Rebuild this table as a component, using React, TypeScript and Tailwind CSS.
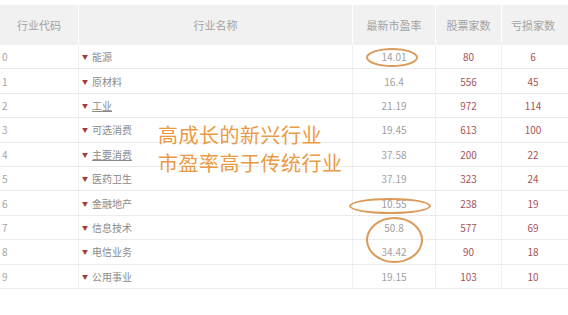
import React from "react";

const rows = [
  { code: "0", name: "能源", pe: "14.01", stocks: "80", loss: "6" },
  { code: "1", name: "原材料", pe: "16.4", stocks: "556", loss: "45" },
  { code: "2", name: "工业", pe: "21.19", stocks: "972", loss: "114", underline: true },
  { code: "3", name: "可选消费", pe: "19.45", stocks: "613", loss: "100" },
  { code: "4", name: "主要消费", pe: "37.58", stocks: "200", loss: "22", underline: true },
  { code: "5", name: "医药卫生", pe: "37.19", stocks: "323", loss: "24" },
  { code: "6", name: "金融地产", pe: "10.55", stocks: "238", loss: "19" },
  { code: "7", name: "信息技术", pe: "50.8", stocks: "577", loss: "69" },
  { code: "8", name: "电信业务", pe: "34.42", stocks: "90", loss: "18" },
  { code: "9", name: "公用事业", pe: "19.15", stocks: "103", loss: "10" },
];

const cols = "grid grid-cols-[79px_274px_83px_66px_62px]";

export default function App() {
  return (
    <div
      className="relative w-[568px] h-[315px] bg-white overflow-hidden"
      style={{ fontFamily: '"Noto Sans CJK SC", "Noto Sans", sans-serif' }}
    >
      <div className="pt-[5px]">
        {/* header */}
        <div className={`${cols} h-[40px] bg-[#f1f1f1] text-[11px] text-[#a3a3a3]`}>
          <div className="flex items-center justify-center border-r border-white">行业代码</div>
          <div className="flex items-center justify-center border-r border-white">行业名称</div>
          <div className="flex items-center justify-center border-r border-white">最新市盈率</div>
          <div className="flex items-center justify-center border-r border-white">股票家数</div>
          <div className="flex items-center justify-center">亏损家数</div>
        </div>

        {/* body */}
        {rows.map((r) => (
          <div
            key={r.code}
            className={`${cols} h-[24.4px] border-b border-[#ebebeb] text-[10px]`}
          >
            <div className="flex items-center pl-[2px] text-[#a5a5a5] border-r border-[#f0f0f0]">{r.code}</div>
            <div className="flex items-center pl-[3px] text-[#8a8a8a] border-r border-[#f0f0f0]">
              <span className="text-[#a33a3a] text-[6px] mr-[4px]">▼</span>
              <span className={r.underline ? "underline" : ""}>{r.name}</span>
            </div>
            <div className="flex items-center justify-center text-[#a0a0a0] border-r border-[#f0f0f0]">{r.pe}</div>
            <div className="flex items-center justify-center text-[#a85458] border-r border-[#f0f0f0]">{r.stocks}</div>
            <div className="flex items-center justify-center text-[#a85458]">{r.loss}</div>
          </div>
        ))}
      </div>

      {/* annotations */}
      <div className="absolute left-[158px] top-[121px] text-[20px] leading-[28px] text-[#eb9a44] tracking-[0.5px]">
        <div>高成长的新兴行业</div>
        <div>市盈率高于传统行业</div>
      </div>
      <div className="absolute left-[366px] top-[48px] w-[52px] h-[19px] rounded-[50%] border-2 border-[#dc9a58]" />
      <div className="absolute left-[349px] top-[198px] w-[82px] h-[16px] rounded-[50%] border-2 border-[#dc9a58]" />
      <div className="absolute left-[366px] top-[217px] w-[57px] h-[46px] rounded-[50%] border-2 border-[#dc9a58]" />
    </div>
  );
}
